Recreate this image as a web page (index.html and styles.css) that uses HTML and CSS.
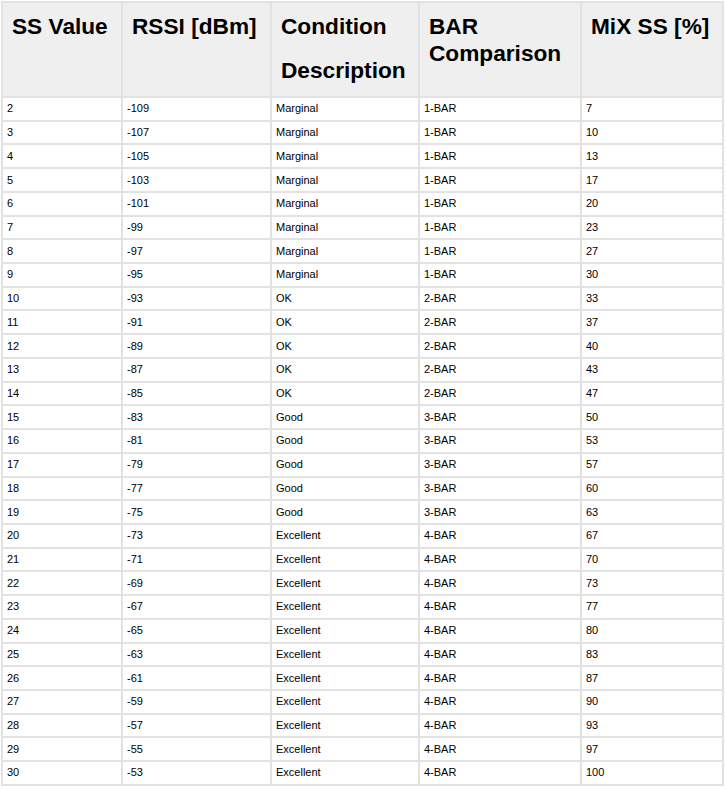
FILE: index.html
```html
<!DOCTYPE html>
<html>
<head>
<meta charset="utf-8">
<link rel="stylesheet" href="styles.css">
</head>
<body>
<table class="ss-table">
  <colgroup>
    <col class="c1"><col class="c2"><col class="c3"><col class="c4"><col class="c5">
  </colgroup>
  <thead>
    <tr>
      <th>SS Value</th>
      <th>RSSI [dBm]</th>
      <th><div>Condition</div><div class="second">Description</div></th>
      <th>BAR Comparison</th>
      <th>MiX SS [%]</th>
    </tr>
  </thead>
  <tbody>
    <tr><td>2</td><td>-109</td><td>Marginal</td><td>1-BAR</td><td>7</td></tr>
    <tr><td>3</td><td>-107</td><td>Marginal</td><td>1-BAR</td><td>10</td></tr>
    <tr><td>4</td><td>-105</td><td>Marginal</td><td>1-BAR</td><td>13</td></tr>
    <tr><td>5</td><td>-103</td><td>Marginal</td><td>1-BAR</td><td>17</td></tr>
    <tr><td>6</td><td>-101</td><td>Marginal</td><td>1-BAR</td><td>20</td></tr>
    <tr><td>7</td><td>-99</td><td>Marginal</td><td>1-BAR</td><td>23</td></tr>
    <tr><td>8</td><td>-97</td><td>Marginal</td><td>1-BAR</td><td>27</td></tr>
    <tr><td>9</td><td>-95</td><td>Marginal</td><td>1-BAR</td><td>30</td></tr>
    <tr><td>10</td><td>-93</td><td>OK</td><td>2-BAR</td><td>33</td></tr>
    <tr><td>11</td><td>-91</td><td>OK</td><td>2-BAR</td><td>37</td></tr>
    <tr><td>12</td><td>-89</td><td>OK</td><td>2-BAR</td><td>40</td></tr>
    <tr><td>13</td><td>-87</td><td>OK</td><td>2-BAR</td><td>43</td></tr>
    <tr><td>14</td><td>-85</td><td>OK</td><td>2-BAR</td><td>47</td></tr>
    <tr><td>15</td><td>-83</td><td>Good</td><td>3-BAR</td><td>50</td></tr>
    <tr><td>16</td><td>-81</td><td>Good</td><td>3-BAR</td><td>53</td></tr>
    <tr><td>17</td><td>-79</td><td>Good</td><td>3-BAR</td><td>57</td></tr>
    <tr><td>18</td><td>-77</td><td>Good</td><td>3-BAR</td><td>60</td></tr>
    <tr><td>19</td><td>-75</td><td>Good</td><td>3-BAR</td><td>63</td></tr>
    <tr><td>20</td><td>-73</td><td>Excellent</td><td>4-BAR</td><td>67</td></tr>
    <tr><td>21</td><td>-71</td><td>Excellent</td><td>4-BAR</td><td>70</td></tr>
    <tr><td>22</td><td>-69</td><td>Excellent</td><td>4-BAR</td><td>73</td></tr>
    <tr><td>23</td><td>-67</td><td>Excellent</td><td>4-BAR</td><td>77</td></tr>
    <tr><td>24</td><td>-65</td><td>Excellent</td><td>4-BAR</td><td>80</td></tr>
    <tr><td>25</td><td>-63</td><td>Excellent</td><td>4-BAR</td><td>83</td></tr>
    <tr><td>26</td><td>-61</td><td>Excellent</td><td>4-BAR</td><td>87</td></tr>
    <tr><td>27</td><td>-59</td><td>Excellent</td><td>4-BAR</td><td>90</td></tr>
    <tr><td>28</td><td>-57</td><td>Excellent</td><td>4-BAR</td><td>93</td></tr>
    <tr><td>29</td><td>-55</td><td>Excellent</td><td>4-BAR</td><td>97</td></tr>
    <tr><td>30</td><td>-53</td><td>Excellent</td><td>4-BAR</td><td>100</td></tr>
  </tbody>
</table>
</body>
</html>
```
FILE: styles.css
```css
html, body {
  margin: 0;
  padding: 0;
  background: #ffffff;
}
body {
  padding: 1px;
  font-family: "Liberation Sans", Arial, sans-serif;
  color: #000000;
}
.ss-table {
  border-collapse: collapse;
  table-layout: fixed;
  width: 721px;
}
.c1 { width: 120px; }
.c2 { width: 149px; }
.c3 { width: 148px; }
.c4 { width: 162px; }
.c5 { width: 142px; }

.ss-table th,
.ss-table td {
  border: 2px solid #e2e2e2;
}
.ss-table th {
  background: #efefef;
  font-size: 22.67px;
  font-weight: bold;
  line-height: 27px;
  text-align: left;
  vertical-align: top;
  padding: 10px 9px 0 9px;
  height: 95px;
  box-sizing: border-box;
}
.ss-table th .second {
  margin-top: 17px;
}
.ss-table td {
  font-size: 11px;
  line-height: 13px;
  padding: 0 4px;
  height: 21.72px;
  vertical-align: middle;
}
```
